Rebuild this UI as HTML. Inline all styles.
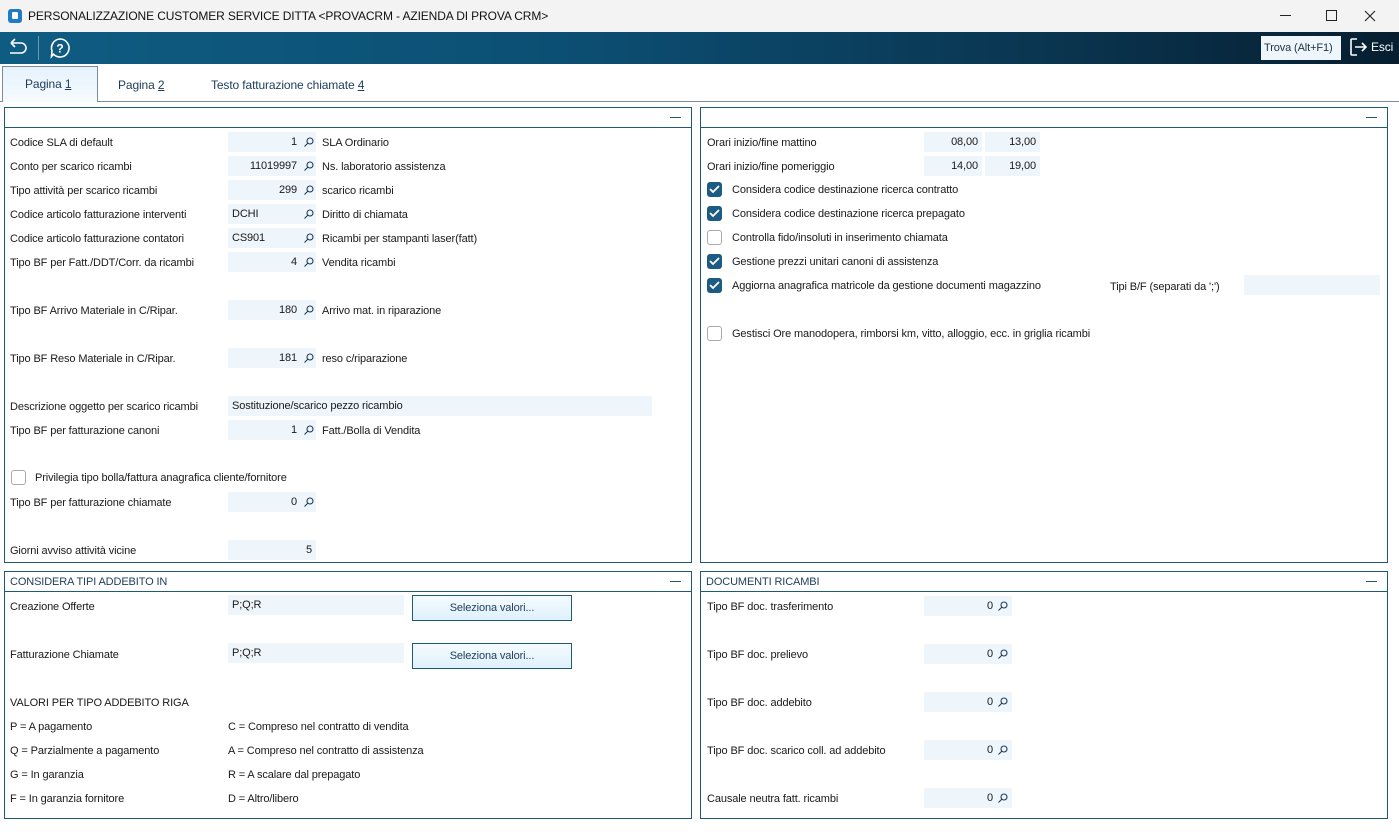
<!DOCTYPE html>
<html><head><meta charset="utf-8"><style>
*{margin:0;padding:0;box-sizing:border-box}
body{width:1399px;height:832px;overflow:hidden;background:#fff;font-family:"Liberation Sans",sans-serif;font-size:11px;color:#1a1a1a;position:relative;letter-spacing:-0.12px}
.a{position:absolute;white-space:nowrap}
.t{position:absolute;white-space:nowrap;line-height:14px;margin-top:1px}
.in{position:absolute;height:20px;background:#eef5fb;line-height:21px;padding:0 4px}
.num{text-align:right}
.panel{position:absolute;border:1px solid #1e5a72}
.ph{position:absolute;left:0;right:0;top:0;height:20px;border-bottom:1px solid #1e5a72;font-size:11px;line-height:21px;padding-left:5px;color:#1e3c5a}
.ph .m{position:absolute;right:10px;top:9px;width:11px;height:1px;background:#1e5a72}
.cb{position:absolute;width:15px;height:15px;border-radius:3px}
.cb.on{background:#1d5c82}
.cb.off{border:1px solid #aaa;background:#fff}
.btn{position:absolute;width:160px;height:26px;border:1px solid #1e5a72;background:linear-gradient(#f4fbff,#dff1fb);text-align:center;line-height:24px;color:#1e3c5a}
</style></head><body>
<div class="a" style="left:0;top:0;width:1399px;height:32px;background:#f3f3f3"></div>
<div class="a" style="left:8px;top:9px;width:14px;height:14px;border-radius:3px;background:#1e7bc4"><div class="a" style="left:4px;top:3px;width:6px;height:7px;background:#fff;border-radius:1px"></div></div>
<div class="t" style="left:28px;top:8px;font-size:12px;color:#111">PERSONALIZZAZIONE CUSTOMER SERVICE DITTA &lt;PROVACRM - AZIENDA DI PROVA CRM&gt;</div>
<div class="a" style="left:1280px;top:15px;width:11px;height:1px;background:#222"></div>
<div class="a" style="left:1326px;top:10px;width:11px;height:11px;border:1px solid #222"></div>
<svg class="a" style="left:1363px;top:9px" width="14" height="14"><path d="M2 2l10 10M12 2L2 12" stroke="#222" stroke-width="1.1"/></svg>
<div class="a" style="left:0;top:32px;width:1399px;height:32px;background:linear-gradient(90deg,#0f5c82 0%,#0c4f74 40%,#0a3550 75%,#061e30 100%)"></div>
<svg class="a" style="left:6px;top:37px" width="24" height="22" viewBox="0 0 24 22"><path d="M5 6h10a5 5 0 0 1 0 10H4M5 6l4-4M5 6l4 4" stroke="#fff" stroke-width="1.6" fill="none"/></svg>
<div class="a" style="left:38px;top:36px;width:1px;height:24px;background:#6a9ab4"></div>
<svg class="a" style="left:48px;top:36px" width="24" height="24" viewBox="0 0 24 24"><path d="M12 3a9 9 0 1 1-6.5 15.2L3.5 20.5 4 15A9 9 0 0 1 12 3z" stroke="#fff" stroke-width="1.6" fill="none"/><text x="12" y="16.5" text-anchor="middle" fill="#fff" font-size="12" font-weight="bold" font-family="Liberation Sans">?</text></svg>
<div class="a" style="left:1261px;top:36px;width:80px;height:24px;background:#eef6fc;line-height:24px;padding-left:3px;font-size:11px;color:#234">Trova (Alt+F1)</div>
<svg class="a" style="left:1349px;top:37px" width="20" height="20" viewBox="0 0 20 20"><path d="M8 2H3a1 1 0 0 0-1 1v14a1 1 0 0 0 1 1h5M6 10h11M13 6l4 4-4 4" stroke="#fff" stroke-width="1.6" fill="none"/></svg>
<div class="t" style="left:1371px;top:39px;color:#fff;font-size:12px">Esci</div>
<div class="a" style="left:0;top:101px;width:1399px;height:1px;background:#7a8c98"></div>
<div class="a" style="left:2px;top:66px;width:96px;height:36px;background:linear-gradient(#e6f2fb,#f6fbff);border:1px solid #7a8c98;border-bottom:none"></div>
<div class="t" style="left:25px;top:76px;font-size:12px;color:#1e3c5a">Pagina <u>1</u></div>
<div class="t" style="left:118px;top:77px;font-size:12px;color:#1e3c5a">Pagina <u>2</u></div>
<div class="t" style="left:211px;top:77px;font-size:12px;color:#1e3c5a">Testo fatturazione chiamate <u>4</u></div>

<div class="panel" style="left:4px;top:107px;width:688px;height:456px"><div class="ph"><span class="m"></span></div></div>
<div class="panel" style="left:700px;top:107px;width:688px;height:456px"><div class="ph"><span class="m"></span></div></div>
<div class="panel" style="left:4px;top:571px;width:688px;height:248px"><div class="ph">CONSIDERA TIPI ADDEBITO IN<span class="m"></span></div></div>
<div class="panel" style="left:700px;top:571px;width:688px;height:248px"><div class="ph">DOCUMENTI RICAMBI<span class="m"></span></div></div>

<div class="t" style="left:10px;top:135px">Codice SLA di default</div>
<div class="in num" style="left:228px;top:132px;width:88px;padding-right:19px">1</div><div class="t" style="left:322px;top:135px">SLA Ordinario</div>
<div class="t" style="left:10px;top:159px">Conto per scarico ricambi</div>
<div class="in num" style="left:228px;top:156px;width:88px;padding-right:19px">11019997</div><div class="t" style="left:322px;top:159px">Ns. laboratorio assistenza</div>
<div class="t" style="left:10px;top:183px">Tipo attività per scarico ricambi</div>
<div class="in num" style="left:228px;top:180px;width:88px;padding-right:19px">299</div><div class="t" style="left:322px;top:183px">scarico ricambi</div>
<div class="t" style="left:10px;top:207px">Codice articolo fatturazione interventi</div>
<div class="in" style="left:228px;top:204px;width:88px">DCHI</div><div class="t" style="left:322px;top:207px">Diritto di chiamata</div>
<div class="t" style="left:10px;top:231px">Codice articolo fatturazione contatori</div>
<div class="in" style="left:228px;top:228px;width:88px">CS901</div><div class="t" style="left:322px;top:231px">Ricambi per stampanti laser(fatt)</div>
<div class="t" style="left:10px;top:255px">Tipo BF per Fatt./DDT/Corr. da ricambi</div>
<div class="in num" style="left:228px;top:252px;width:88px;padding-right:19px">4</div><div class="t" style="left:322px;top:255px">Vendita ricambi</div>
<div class="t" style="left:10px;top:303px">Tipo BF Arrivo Materiale in C/Ripar.</div>
<div class="in num" style="left:228px;top:300px;width:88px;padding-right:19px">180</div><div class="t" style="left:322px;top:303px">Arrivo mat. in riparazione</div>
<div class="t" style="left:10px;top:351px">Tipo BF Reso Materiale in C/Ripar.</div>
<div class="in num" style="left:228px;top:348px;width:88px;padding-right:19px">181</div><div class="t" style="left:322px;top:351px">reso c/riparazione</div>
<div class="t" style="left:10px;top:399px">Descrizione oggetto per scarico ricambi</div>
<div class="in" style="left:228px;top:396px;width:424px">Sostituzione/scarico pezzo ricambio</div>
<div class="t" style="left:10px;top:423px">Tipo BF per fatturazione canoni</div>
<div class="in num" style="left:228px;top:420px;width:88px;padding-right:19px">1</div><div class="t" style="left:322px;top:423px">Fatt./Bolla di Vendita</div>
<div class="cb off" style="left:11px;top:470px"></div><div class="t" style="left:35px;top:470px">Privilegia tipo bolla/fattura anagrafica cliente/fornitore</div>
<div class="t" style="left:10px;top:495px">Tipo BF per fatturazione chiamate</div>
<div class="in num" style="left:228px;top:492px;width:88px;padding-right:19px">0</div>
<div class="t" style="left:10px;top:543px">Giorni avviso attività vicine</div>
<div class="in num" style="left:228px;top:540px;width:88px;padding-right:4px">5</div>

<div class="t" style="left:707px;top:135px">Orari inizio/fine mattino</div>
<div class="in num" style="left:924px;top:132px;width:58px">08,00</div><div class="in num" style="left:985px;top:132px;width:55px">13,00</div>
<div class="t" style="left:707px;top:159px">Orari inizio/fine pomeriggio</div>
<div class="in num" style="left:924px;top:156px;width:58px">14,00</div><div class="in num" style="left:985px;top:156px;width:55px">19,00</div>
<div class="cb on" style="left:707px;top:182px"></div><div class="t" style="left:732px;top:182px">Considera codice destinazione ricerca contratto</div>
<div class="cb on" style="left:707px;top:206px"></div><div class="t" style="left:732px;top:206px">Considera codice destinazione ricerca prepagato</div>
<div class="cb off" style="left:707px;top:230px"></div><div class="t" style="left:732px;top:230px">Controlla fido/insoluti in inserimento chiamata</div>
<div class="cb on" style="left:707px;top:254px"></div><div class="t" style="left:732px;top:254px">Gestione prezzi unitari canoni di assistenza</div>
<div class="cb on" style="left:707px;top:278px"></div><div class="t" style="left:732px;top:278px">Aggiorna anagrafica matricole da gestione documenti magazzino</div>
<div class="t" style="left:1110px;top:279px">Tipi B/F (separati da ';')</div>
<div class="in" style="left:1244px;top:275px;width:136px"></div>
<div class="cb off" style="left:707px;top:326px"></div><div class="t" style="left:732px;top:326px">Gestisci Ore manodopera, rimborsi km, vitto, alloggio, ecc. in griglia ricambi</div>

<div class="t" style="left:10px;top:599px">Creazione Offerte</div>
<div class="in" style="left:228px;top:595px;width:176px">P;Q;R</div>
<div class="btn" style="left:412px;top:595px">Seleziona valori...</div>
<div class="t" style="left:10px;top:647px">Fatturazione Chiamate</div>
<div class="in" style="left:228px;top:643px;width:176px">P;Q;R</div>
<div class="btn" style="left:412px;top:643px">Seleziona valori...</div>
<div class="t" style="left:10px;top:695px">VALORI PER TIPO ADDEBITO RIGA</div>
<div class="t" style="left:10px;top:719px">P = A pagamento</div><div class="t" style="left:228px;top:719px">C = Compreso nel contratto di vendita</div>
<div class="t" style="left:10px;top:743px">Q = Parzialmente a pagamento</div><div class="t" style="left:228px;top:743px">A = Compreso nel contratto di assistenza</div>
<div class="t" style="left:10px;top:767px">G = In garanzia</div><div class="t" style="left:228px;top:767px">R = A scalare dal prepagato</div>
<div class="t" style="left:10px;top:791px">F = In garanzia fornitore</div><div class="t" style="left:228px;top:791px">D = Altro/libero</div>

<div class="t" style="left:707px;top:599px">Tipo BF doc. trasferimento</div><div class="in num" style="left:924px;top:596px;width:88px;padding-right:19px">0</div>
<div class="t" style="left:707px;top:647px">Tipo BF doc. prelievo</div><div class="in num" style="left:924px;top:644px;width:88px;padding-right:19px">0</div>
<div class="t" style="left:707px;top:695px">Tipo BF doc. addebito</div><div class="in num" style="left:924px;top:692px;width:88px;padding-right:19px">0</div>
<div class="t" style="left:707px;top:743px">Tipo BF doc. scarico coll. ad addebito</div><div class="in num" style="left:924px;top:740px;width:88px;padding-right:19px">0</div>
<div class="t" style="left:707px;top:791px">Causale neutra fatt. ricambi</div><div class="in num" style="left:924px;top:788px;width:88px;padding-right:19px">0</div>

<svg class="a" style="left:0;top:0" width="1399" height="832">
<g stroke="#fff" stroke-width="1.8" fill="none">
<path d="M710 189l3 3 6-6"/><path d="M710 213l3 3 6-6"/><path d="M710 261l3 3 6-6"/><path d="M710 285l3 3 6-6"/>
</g>
<g stroke="#1e3c5a" stroke-width="1.1" fill="none">
<g id="m"><circle cx="310" cy="141" r="3"/><path d="M308 143l-3.5 3.5"/></g>
<use href="#m" y="24"/><use href="#m" y="48"/><use href="#m" y="72"/><use href="#m" y="96"/><use href="#m" y="120"/><use href="#m" y="168"/><use href="#m" y="216"/><use href="#m" y="288"/><use href="#m" y="360"/>
<use href="#m" x="694" y="464"/><use href="#m" x="694" y="512"/><use href="#m" x="694" y="560"/><use href="#m" x="694" y="608"/><use href="#m" x="694" y="656"/>
</g>
</svg>
</body></html>
